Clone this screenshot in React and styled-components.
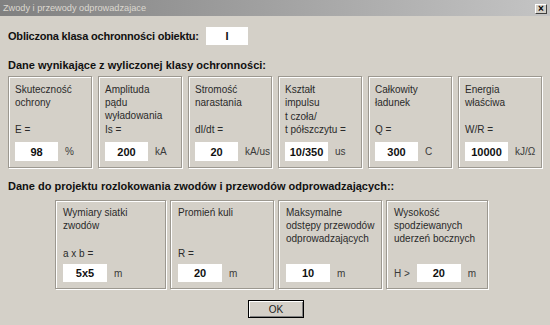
import React from 'react'
import styled, { createGlobalStyle } from 'styled-components'

const Global = createGlobalStyle`
  html, body {
    margin: 0;
    padding: 0;
    background: #d4d0c8;
  }
  body {
    font-family: "Liberation Sans", Arial, sans-serif;
    color: #1a1a1a;
  }
`

const Window = styled.div`
  width: 550px;
  height: 325px;
  background: #d4d0c8;
  display: flex;
  flex-direction: column;
  overflow: hidden;
`

const TitleBar = styled.div`
  height: 16px;
  flex: none;
  display: flex;
  align-items: center;
  justify-content: space-between;
  padding: 0 3px 0 3px;
  background: linear-gradient(to right, #808080, #c4c4c4);
`

const TitleText = styled.span`
  font-size: 9.2px;
  color: #dcd8d0;
`

const CloseButton = styled.div`
  width: 12px;
  height: 10px;
  box-sizing: border-box;
  margin-top: 2px;
  background: #d4d0c8;
  border: 1px solid;
  border-color: #ffffff #404040 #404040 #ffffff;
  display: flex;
  align-items: center;
  justify-content: center;
  font-size: 10px;
  font-weight: bold;
  line-height: 1;
  color: #000;
`

const Body = styled.div`
  flex: 1;
  display: flex;
  flex-direction: column;
  padding: 11px 8px 0 8px;
`

const ClassRow = styled.div`
  display: flex;
  align-items: center;
`

const Heading = styled.div`
  font-size: 11px;
  font-weight: bold;
  line-height: 14px;
  color: #111;
  white-space: nowrap;
  margin-top: ${p => p.top || 0}px;
`

const ClassLabel = styled(Heading)`
  width: 198px;
  letter-spacing: -0.2px;
`

const Value = styled.div`
  width: ${p => p.w || 43}px;
  height: ${p => p.h || 19}px;
  flex: none;
  background: #fff;
  display: flex;
  align-items: center;
  justify-content: center;
  font-size: 11px;
  font-weight: bold;
  color: #111;
`

const BoxRow = styled.div`
  display: flex;
  gap: ${p => p.gap}px;
  margin-top: ${p => p.top}px;
  margin-left: ${p => p.left || 0}px;
`

const Group = styled.div`
  width: ${p => p.w}px;
  height: ${p => p.h}px;
  box-sizing: border-box;
  flex: none;
  display: flex;
  flex-direction: column;
  padding: ${p => p.pt}px 4px 6px ${p => p.pl}px;
  border: 1px solid #9c9890;
  box-shadow: inset 1px 1px 0 #ffffff, 1px 1px 0 #ffffff;
`

const Label = styled.div`
  font-size: 10px;
  line-height: 13px;
  color: #2a2a2a;
  white-space: pre-line;
`

const VarLabel = styled(Label)`
  margin-top: auto;
  margin-bottom: ${p => p.gap}px;
`

const InputRow = styled.div`
  display: flex;
  align-items: center;
  gap: 7px;
`

const Unit = styled.span`
  font-size: 10px;
  color: #3a3a3a;
  white-space: nowrap;
`

const Footer = styled.div`
  display: flex;
  justify-content: center;
  margin-top: 11px;
  padding-left: 2px;
`

const OkButton = styled.div`
  width: 56px;
  height: 18px;
  box-sizing: border-box;
  border: 1px solid #000;
  box-shadow: inset 1px 1px 0 #ffffff, inset -1px -1px 0 #808080;
  display: flex;
  align-items: center;
  justify-content: center;
  font-size: 10px;
  color: #222;
`

const topParams = [
  { title: 'Skuteczność\nochrony', v: 'E =', value: '98', unit: '%' },
  { title: 'Amplituda\npądu\nwyładowania', v: 'Is =', value: '200', unit: 'kA' },
  { title: 'Stromość\nnarastania', v: 'dI/dt =', value: '20', unit: 'kA/us' },
  { title: 'Kształt\nimpulsu', v: 't czoła/\nt półszczytu =', value: '10/350', unit: 'us' },
  { title: 'Całkowity\nładunek', v: 'Q =', value: '300', unit: 'C' },
  { title: 'Energia\nwłaściwa', v: 'W/R =', value: '10000', unit: 'kJ/Ω' }
]

const bottomParams = [
  { w: 111, title: 'Wymiary siatki\nzwodów', v: 'a x b =', value: '5x5', unit: 'm' },
  { w: 104, title: 'Promień kuli', v: 'R =', value: '20', unit: 'm' },
  { w: 104, title: 'Maksymalne\nodstępy przewodów\nodprowadzających', v: '', value: '10', unit: 'm' },
  { w: 102, title: 'Wysokość\nspodziewanych\nuderzeń bocznych', prefix: 'H >', value: '20', unit: 'm' }
]

const App = () => {
  return (
    <Window>
      <Global />
      <TitleBar>
        <TitleText>Zwody i przewody odprowadzajace</TitleText>
        <CloseButton>×</CloseButton>
      </TitleBar>
      <Body>
        <ClassRow>
          <ClassLabel>Obliczona klasa ochronności obiektu:</ClassLabel>
          <Value w={42} h={18}>I</Value>
        </ClassRow>

        <Heading top={13}>Dane wynikające z wyliczonej klasy ochronności:</Heading>

        <BoxRow gap={6} top={4}>
          {topParams.map(p => (
            <Group key={p.title} w={84} h={92} pt={6} pl={6}>
              <Label>{p.title}</Label>
              <VarLabel gap={6}>{p.v}</VarLabel>
              <InputRow>
                <Value>{p.value}</Value>
                <Unit>{p.unit}</Unit>
              </InputRow>
            </Group>
          ))}
        </BoxRow>

        <Heading top={11}>Dane do projektu rozlokowania zwodów i przewodów odprowadzających::</Heading>

        <BoxRow gap={4} top={7} left={47}>
          {bottomParams.map(p => (
            <Group key={p.title} w={p.w} h={89} pt={5} pl={7}>
              <Label>{p.title}</Label>
              <VarLabel gap={4}>{p.v}</VarLabel>
              <InputRow>
                {p.prefix ? <Unit>{p.prefix}</Unit> : null}
                <Value w={44} h={18}>{p.value}</Value>
                <Unit>{p.unit}</Unit>
              </InputRow>
            </Group>
          ))}
        </BoxRow>

        <Footer>
          <OkButton>OK</OkButton>
        </Footer>
      </Body>
    </Window>
  )
}

export default App
